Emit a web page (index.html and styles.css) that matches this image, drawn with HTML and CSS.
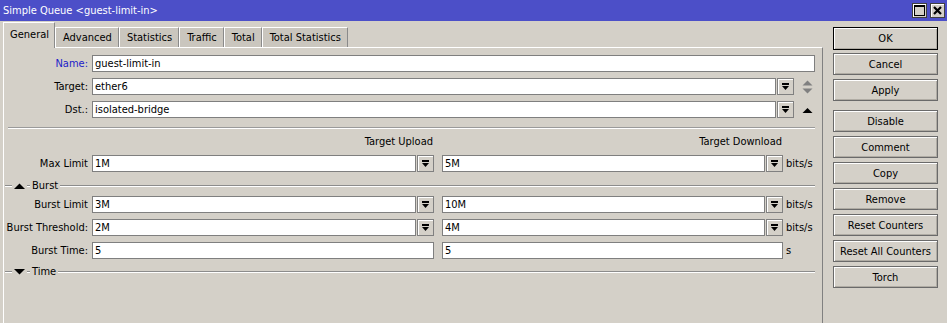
FILE: index.html
```
<!DOCTYPE html>
<html lang="en">
<head>
    <meta charset="UTF-8">
    <title>Simple Queue &lt;guest-limit-in&gt;</title>
    <link rel="stylesheet" href="styles.css">
</head>
<body>
    <div class="window">
        <div class="titlebar">
            <span class="title">Simple Queue &lt;guest-limit-in&gt;</span>
            <span class="tb-btn">
                <svg width="11" height="11" viewBox="0 0 11 11"><rect x="0.5" y="0.5" width="10" height="10" fill="none" stroke="#000"/><rect x="0" y="0" width="11" height="2" fill="#000"/></svg>
            </span>
            <span class="tb-btn">
                <svg width="9" height="9" viewBox="0 0 9 9"><path d="M1 1 L8 8 M8 1 L1 8" stroke="#000" stroke-width="2.2"/></svg>
            </span>
        </div>

        <div class="main">
            <div class="left">
                <div class="tabs">
                    <div class="tab active">General</div>
                    <div class="tab">Advanced</div>
                    <div class="tab">Statistics</div>
                    <div class="tab">Traffic</div>
                    <div class="tab">Total</div>
                    <div class="tab">Total Statistics</div>
                </div>

                <div class="panel">
                    <div class="form top-form">
                        <label class="lbl blue">Name:</label>
                        <input class="field wide" type="text" value="guest-limit-in" readonly>

                        <label class="lbl">Target:</label>
                        <div class="wide combo">
                            <input class="field" type="text" value="ether6" readonly>
                            <span class="dd"><svg width="9" height="9" viewBox="0 0 9 9"><rect x="1" y="1" width="7" height="2" fill="#000"/><path d="M1 4 H8 L4.5 8 Z" fill="#000"/></svg></span>
                            <span class="updown">
                                <svg width="11" height="14" viewBox="0 0 11 14"><path d="M0.5 5.5 L5.5 0.5 L10.5 5.5 Z" fill="#808080"/><path d="M0.5 8.5 H10.5 L5.5 13.5 Z" fill="#808080"/></svg>
                            </span>
                        </div>

                        <label class="lbl">Dst.:</label>
                        <div class="wide combo">
                            <input class="field" type="text" value="isolated-bridge" readonly>
                            <span class="dd"><svg width="9" height="9" viewBox="0 0 9 9"><rect x="1" y="1" width="7" height="2" fill="#000"/><path d="M1 4 H8 L4.5 8 Z" fill="#000"/></svg></span>
                            <span class="updown">
                                <svg width="11" height="14" viewBox="0 0 11 14"><path d="M0.5 10 L5.5 5 L10.5 10 Z" fill="#000"/></svg>
                            </span>
                        </div>
                    </div>

                    <div class="separator"></div>

                    <div class="form cols heads">
                        <span></span>
                        <span class="head">Target Upload</span>
                        <span class="head">Target Download</span>
                        <span></span>
                    </div>

                    <div class="form cols limits">
                        <label class="lbl">Max Limit</label>
                        <div class="combo">
                            <input class="field" type="text" value="1M" readonly>
                            <span class="dd"><svg width="9" height="9" viewBox="0 0 9 9"><rect x="1" y="1" width="7" height="2" fill="#000"/><path d="M1 4 H8 L4.5 8 Z" fill="#000"/></svg></span>
                        </div>
                        <div class="combo">
                            <input class="field" type="text" value="5M" readonly>
                            <span class="dd"><svg width="9" height="9" viewBox="0 0 9 9"><rect x="1" y="1" width="7" height="2" fill="#000"/><path d="M1 4 H8 L4.5 8 Z" fill="#000"/></svg></span>
                        </div>
                        <span class="unit">bits/s</span>
                    </div>

                    <div class="section">
                        <span class="groove lead"></span>
                        <svg width="11" height="6" viewBox="0 0 11 6"><path d="M0 6 L5.5 0.5 L11 6 Z" fill="#000"/></svg>
                        <span class="groove tick"></span>
                        <span class="section-name">Burst</span>
                        <span class="groove rest"></span>
                    </div>

                    <div class="form cols burst">
                        <label class="lbl">Burst Limit</label>
                        <div class="combo">
                            <input class="field" type="text" value="3M" readonly>
                            <span class="dd"><svg width="9" height="9" viewBox="0 0 9 9"><rect x="1" y="1" width="7" height="2" fill="#000"/><path d="M1 4 H8 L4.5 8 Z" fill="#000"/></svg></span>
                        </div>
                        <div class="combo">
                            <input class="field" type="text" value="10M" readonly>
                            <span class="dd"><svg width="9" height="9" viewBox="0 0 9 9"><rect x="1" y="1" width="7" height="2" fill="#000"/><path d="M1 4 H8 L4.5 8 Z" fill="#000"/></svg></span>
                        </div>
                        <span class="unit">bits/s</span>

                        <label class="lbl">Burst Threshold:</label>
                        <div class="combo">
                            <input class="field" type="text" value="2M" readonly>
                            <span class="dd"><svg width="9" height="9" viewBox="0 0 9 9"><rect x="1" y="1" width="7" height="2" fill="#000"/><path d="M1 4 H8 L4.5 8 Z" fill="#000"/></svg></span>
                        </div>
                        <div class="combo">
                            <input class="field" type="text" value="4M" readonly>
                            <span class="dd"><svg width="9" height="9" viewBox="0 0 9 9"><rect x="1" y="1" width="7" height="2" fill="#000"/><path d="M1 4 H8 L4.5 8 Z" fill="#000"/></svg></span>
                        </div>
                        <span class="unit">bits/s</span>

                        <label class="lbl">Burst Time:</label>
                        <input class="field" type="text" value="5" readonly>
                        <input class="field" type="text" value="5" readonly>
                        <span class="unit">s</span>
                    </div>

                    <div class="section">
                        <span class="groove lead"></span>
                        <svg width="11" height="6" viewBox="0 0 11 6"><path d="M0 0 L11 0 L5.5 5.5 Z" fill="#000"/></svg>
                        <span class="groove tick"></span>
                        <span class="section-name">Time</span>
                        <span class="groove rest"></span>
                    </div>
                </div>
            </div>

            <div class="side">
                <button class="btn default">OK</button>
                <button class="btn">Cancel</button>
                <button class="btn">Apply</button>
                <button class="btn spaced">Disable</button>
                <button class="btn">Comment</button>
                <button class="btn">Copy</button>
                <button class="btn">Remove</button>
                <button class="btn">Reset Counters</button>
                <button class="btn">Reset All Counters</button>
                <button class="btn">Torch</button>
            </div>
        </div>
    </div>
</body>
</html>
```

FILE: styles.css
```
body {
    margin: 0;
    background-color: #d4d0c8;
    font-family: "DejaVu Sans Condensed", "Liberation Sans", sans-serif;
    font-size: 11px;
    color: #000;
}
.window {
    width: 947px;
    height: 323px;
    overflow: hidden;
}
.titlebar {
    height: 21px;
    background-color: #4c4fc8;
    display: flex;
    align-items: center;
    padding: 0 2px 0 3px;
    gap: 3px;
}
.title {
    color: #fff;
    flex: 1;
}
.tb-btn {
    width: 15px;
    height: 15px;
    box-sizing: border-box;
    background-color: #d4d0c8;
    border: 1px solid #404040;
    box-shadow: inset 1px 1px #fff;
    display: flex;
    align-items: center;
    justify-content: center;
}
.main {
    display: flex;
}
.left {
    width: 823px;
}
.tabs {
    display: flex;
    align-items: flex-end;
    height: 26px;
    margin-left: 3px;
}
.tab {
    height: 20px;
    line-height: 20px;
    padding: 0 6px 0 7px;
    background-color: #cac6be;
    border-left: 1px solid #fff;
    border-right: 1px solid #8a8a8a;
    border-top: 1px solid #fff;
    box-sizing: border-box;
}
.tab.active {
    height: 26px;
    line-height: 23px;
    padding: 0 5px 0 6px;
    background-color: #d4d0c8;
    margin-bottom: -1px;
    position: relative;
    z-index: 1;
}
.panel {
    margin-left: 3px;
    height: 276px;
    border-top: 1px solid #fff;
    border-left: 1px solid #fff;
    border-right: 1px solid #808080;
    box-sizing: border-box;
    padding-top: 7px;
}

/* label | upload | gap | download | gap | unit */
.form {
    display: grid;
    grid-template-columns: 88px 342px 8px 341px 3px 29px;
    row-gap: 6px;
    grid-auto-rows: 17px;
}
.cols > :nth-child(4n+1) { grid-column: 1; }
.cols > :nth-child(4n+2) { grid-column: 2; }
.cols > :nth-child(4n+3) { grid-column: 4; }
.cols > :nth-child(4n)   { grid-column: 6; }
.top-form > .lbl  { grid-column: 1; }
.top-form > .wide { grid-column: 2 / -1; }

.lbl {
    text-align: right;
    line-height: 17px;
    padding-right: 4px;
    white-space: nowrap;
}
.lbl.blue {
    color: #2222c8;
}
.field {
    height: 17px;
    box-sizing: border-box;
    border: 1px solid #7f7f7f;
    background-color: #fff;
    font: inherit;
    padding: 0 2px;
    margin: 0;
    width: 100%;
    min-width: 0;
    outline: none;
}
.combo {
    display: flex;
    gap: 1px;
}
.combo .field {
    flex: 1;
}
.dd {
    width: 17px;
    height: 17px;
    box-sizing: border-box;
    flex: none;
    border: 1px solid #808080;
    box-shadow: inset 1px 1px #fff;
    display: flex;
    align-items: center;
    justify-content: center;
}
.updown {
    width: 18px;
    flex: none;
    display: flex;
    align-items: center;
    justify-content: flex-end;
    padding-right: 2px;
}
.separator {
    margin: 9px 7px 0 4px;
    border-top: 1px solid #9a9a9a;
    border-bottom: 1px solid #fff;
}
.heads {
    margin-top: 6px;
    grid-auto-rows: 14px;
}
.head {
    text-align: right;
    line-height: 14px;
    padding-right: 1px;
}
.limits {
    margin-top: 6px;
}
.unit {
    line-height: 17px;
}
.section {
    display: flex;
    align-items: center;
    height: 13px;
    margin-top: 7px;
    margin-right: 7px;
}
.groove {
    height: 0;
    border-top: 1px solid #8c8c8c;
    border-bottom: 1px solid #fff;
}
.lead {
    width: 7px;
    margin: 0 2px 0 1px;
}
.tick {
    width: 3px;
    margin: 0 2px;
}
.section-name {
    margin-right: 2px;
}
.rest {
    flex: 1;
}
.burst {
    margin-top: 4px;
}
.burst + .section {
    margin-top: 6px;
}
.side {
    display: flex;
    flex-direction: column;
    gap: 4px;
    margin-left: 10px;
    padding-top: 6px;
}
.btn {
    width: 105px;
    height: 22px;
    box-sizing: border-box;
    background-color: #d4d0c8;
    border: 1px solid #6a6a6a;
    box-shadow: inset 1px 1px #fff, inset -1px -1px #b0aca4;
    font: inherit;
    color: #000;
    padding: 0;
}
.btn.default {
    border-color: #000;
    height: 23px;
    margin-bottom: -1px;
}
.btn.spaced {
    margin-top: 5px;
}
```
